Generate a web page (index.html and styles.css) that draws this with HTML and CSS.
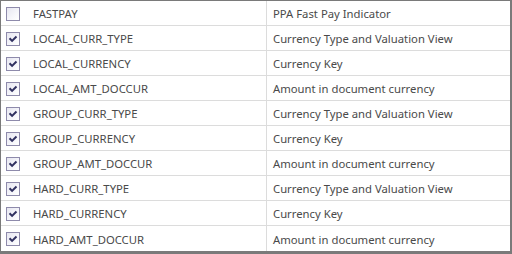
FILE: index.html
```html
<!DOCTYPE html>
<html>
<head>
<meta charset="utf-8">
<link rel="stylesheet" href="styles.css">
</head>
<body>
<div class="grid">
  <div class="row"><div class="c1"><span class="cb"></span><span class="name">FASTPAY</span></div><div class="c2">PPA Fast Pay Indicator</div></div>
  <div class="row"><div class="c1"><span class="cb on"><svg viewBox="0 0 13 13"><path d="M3.5 6.5 L5.5 8.5 L9.5 4.5"/></svg></span><span class="name">LOCAL_CURR_TYPE</span></div><div class="c2">Currency Type and Valuation View</div></div>
  <div class="row"><div class="c1"><span class="cb on"><svg viewBox="0 0 13 13"><path d="M3.5 6.5 L5.5 8.5 L9.5 4.5"/></svg></span><span class="name">LOCAL_CURRENCY</span></div><div class="c2">Currency Key</div></div>
  <div class="row"><div class="c1"><span class="cb on"><svg viewBox="0 0 13 13"><path d="M3.5 6.5 L5.5 8.5 L9.5 4.5"/></svg></span><span class="name">LOCAL_AMT_DOCCUR</span></div><div class="c2">Amount in document currency</div></div>
  <div class="row"><div class="c1"><span class="cb on"><svg viewBox="0 0 13 13"><path d="M3.5 6.5 L5.5 8.5 L9.5 4.5"/></svg></span><span class="name">GROUP_CURR_TYPE</span></div><div class="c2">Currency Type and Valuation View</div></div>
  <div class="row"><div class="c1"><span class="cb on"><svg viewBox="0 0 13 13"><path d="M3.5 6.5 L5.5 8.5 L9.5 4.5"/></svg></span><span class="name">GROUP_CURRENCY</span></div><div class="c2">Currency Key</div></div>
  <div class="row"><div class="c1"><span class="cb on"><svg viewBox="0 0 13 13"><path d="M3.5 6.5 L5.5 8.5 L9.5 4.5"/></svg></span><span class="name">GROUP_AMT_DOCCUR</span></div><div class="c2">Amount in document currency</div></div>
  <div class="row"><div class="c1"><span class="cb on"><svg viewBox="0 0 13 13"><path d="M3.5 6.5 L5.5 8.5 L9.5 4.5"/></svg></span><span class="name">HARD_CURR_TYPE</span></div><div class="c2">Currency Type and Valuation View</div></div>
  <div class="row"><div class="c1"><span class="cb on"><svg viewBox="0 0 13 13"><path d="M3.5 6.5 L5.5 8.5 L9.5 4.5"/></svg></span><span class="name">HARD_CURRENCY</span></div><div class="c2">Currency Key</div></div>
  <div class="row last"><div class="c1"><span class="cb on"><svg viewBox="0 0 13 13"><path d="M3.5 6.5 L5.5 8.5 L9.5 4.5"/></svg></span><span class="name">HARD_AMT_DOCCUR</span></div><div class="c2">Amount in document currency</div></div>
</div>
</body>
</html>
```
FILE: styles.css
```css
html, body { margin: 0; padding: 0; background: #fff; }
.grid {
  box-sizing: border-box;
  width: 512px;
  height: 254px;
  border-style: solid;
  border-color: #7a7a7a;
  border-width: 1px 2px 3px 1px;
  font-family: "Noto Sans", "Open Sans", sans-serif;
  font-size: 11.3px;
  color: #4a4a4a;
  display: flex;
  flex-direction: column;
}
.row {
  height: 25px;
  box-sizing: border-box;
  border-bottom: 1px solid #dcdcdc;
  display: grid;
  grid-template-columns: 266px 1fr;
}
.row.last { border-bottom: none; }
.c1 {
  display: flex;
  align-items: center;
  padding-left: 5px;
  padding-top: 1px;
  border-right: 1px solid #dcdcdc;
}
.c2 {
  display: flex;
  align-items: center;
  padding-left: 6px;
  padding-top: 1px;
}
.cb {
  box-sizing: border-box;
  width: 14px;
  height: 14px;
  border: 1px solid #8e8aab;
  background: linear-gradient(135deg, #e6e6f0 0%, #f6f6fb 60%, #fff 100%);
  display: flex;
  margin-right: 13px;
}
.cb svg { width: 12px; height: 12px; }
.cb path { fill: none; stroke: #303060; stroke-width: 2.2; stroke-linecap: square; }
```
